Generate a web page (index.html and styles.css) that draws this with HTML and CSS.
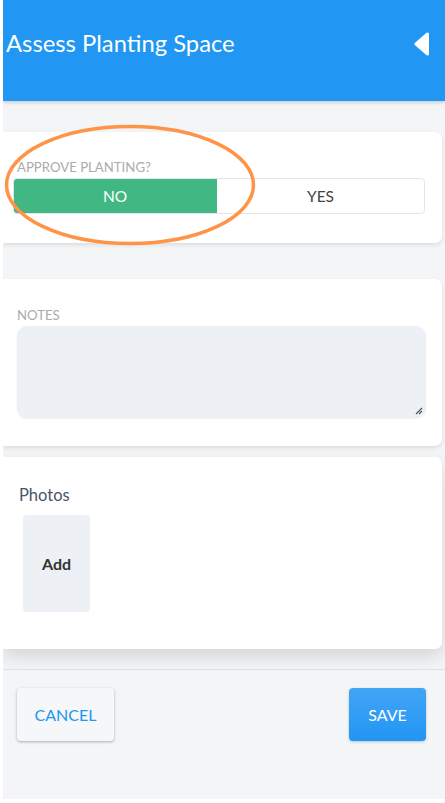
FILE: index.html
```html
<!DOCTYPE html>
<html>
<head>
<meta charset="utf-8">
<link rel="stylesheet" href="styles.css">
</head>
<body>
<div class="app">
  <header class="topbar">
    <h1 class="title">Assess Planting Space</h1>
    <svg class="back" width="16" height="24" viewBox="0 0 16 24"><path d="M13.5 2 L2 12 L13.5 22 Z" fill="#fff" stroke="#fff" stroke-width="3" stroke-linejoin="round"/></svg>
  </header>
  <main class="content">
    <section class="card card-approve">
      <div class="field">
        <div class="label">APPROVE PLANTING?</div>
        <div class="segment">
          <div class="seg seg-on">NO</div>
          <div class="seg">YES</div>
        </div>
      </div>
    </section>
    <section class="card card-notes">
      <div class="label label-notes">NOTES</div>
      <div class="textarea">
        <svg class="grip" width="10" height="10" viewBox="0 0 10 10"><path d="M9 3 L3 9 M9 6 L6 9" stroke="#555" stroke-width="1.2"/></svg>
      </div>
    </section>
    <section class="card card-photos">
      <div class="photos-title">Photos</div>
      <div class="add-tile">Add</div>
    </section>
  </main>
  <footer class="footer">
    <button class="btn btn-cancel">CANCEL</button>
    <button class="btn btn-save">SAVE</button>
  </footer>
  <svg class="annot" width="270" height="130" viewBox="0 0 270 130"><ellipse cx="127" cy="61" rx="123.5" ry="58.5" fill="none" stroke="#ff9448" stroke-width="3.5"/></svg>
</div>
</body>
</html>
```
FILE: styles.css
```css
* { box-sizing: border-box; }
html, body { margin: 0; padding: 0; background: #fff; }
body { font-family: Lato, "Open Sans", sans-serif; }
.app {
  position: relative;
  margin-left: 3px;
  width: 442px;
  height: 799px;
  background: #f4f5f7;
  display: flex;
  flex-direction: column;
  overflow: hidden;
}
.topbar {
  height: 101px;
  flex: none;
  background: #2196f3;
  display: flex;
  align-items: flex-start;
  justify-content: space-between;
  padding: 29px 15px 0 3px;
  box-shadow: 0 2px 3px rgba(0,0,0,0.15);
  position: relative;
  z-index: 1;
}
.title {
  margin: 0;
  color: #fff;
  font-weight: 400;
  font-size: 23.8px;
  line-height: 28px;
  letter-spacing: 0;
}
.back { margin-top: 3px; }
.content {
  flex: 1;
  padding-top: 31px;
  display: flex;
  flex-direction: column;
}
.card {
  background: #fff;
  width: 439px;
  border-radius: 0 7px 7px 0;
  box-shadow: 0 2px 4px rgba(0,0,0,0.10);
}
.card-approve { height: 111px; padding: 27px 17px 0 10px; }
.label {
  font-size: 13.2px;
  line-height: 16px;
  color: #ababab;
  padding-left: 4px;
  margin-bottom: 3px;
}
.segment {
  display: flex;
  height: 36px;
  border: 1px solid #e4e4e4;
  border-radius: 4px;
  overflow: hidden;
}
.seg {
  flex: 1;
  display: flex;
  align-items: center;
  justify-content: center;
  font-size: 15.5px;
  color: #444;
}
.seg-on { flex: 0 0 204px; background: #41b883; color: #fff; margin: -1px 0 -1px -1px; }
.card-notes { margin-top: 36px; height: 167px; padding: 28px 16px 0 14px; }
.label-notes { padding-left: 0; margin-bottom: 3px; }
.textarea {
  height: 92px;
  background: #edf1f5;
  border-radius: 10px;
  box-shadow: 0 1px 2px rgba(0,0,0,0.06);
  display: flex;
  align-items: flex-end;
  justify-content: flex-end;
  padding: 0 3px 3px 0;
}
.card-photos {
  margin-top: 11px;
  height: 192px;
  padding: 28px 0 0 16px;
  box-shadow: 0 8px 18px rgba(0,0,0,0.13);
}
.photos-title { font-size: 16.5px; line-height: 21px; color: #4a5568; }
.add-tile {
  margin: 9px 0 0 4px;
  width: 67px;
  height: 97px;
  background: #edf1f5;
  border-radius: 4px;
  display: flex;
  align-items: center;
  justify-content: center;
  font-weight: 700;
  font-size: 16px;
  color: #333;
}
.footer {
  flex: none;
  height: 130px;
  border-top: 1px solid #dfe1e4;
  display: flex;
  justify-content: space-between;
  align-items: flex-start;
  padding: 18px 16px 0 14px;
}
.btn {
  font-family: Lato, "Open Sans", sans-serif;
  height: 53px;
  border-radius: 4px;
  font-size: 16px;
  border: none;
  padding: 0;
}
.btn-cancel {
  width: 97px;
  background: #f6f7f9;
  color: #2196f3;
  box-shadow: 0 1px 3px rgba(0,0,0,0.3);
}
.btn-save {
  width: 77px;
  margin-right: 3px;
  background: linear-gradient(#42a5f5, #2196f3);
  color: #fff;
  box-shadow: 0 1px 3px rgba(0,0,0,0.2);
}
.annot { position: absolute; left: 0; top: 124px; z-index: 2; }
```
